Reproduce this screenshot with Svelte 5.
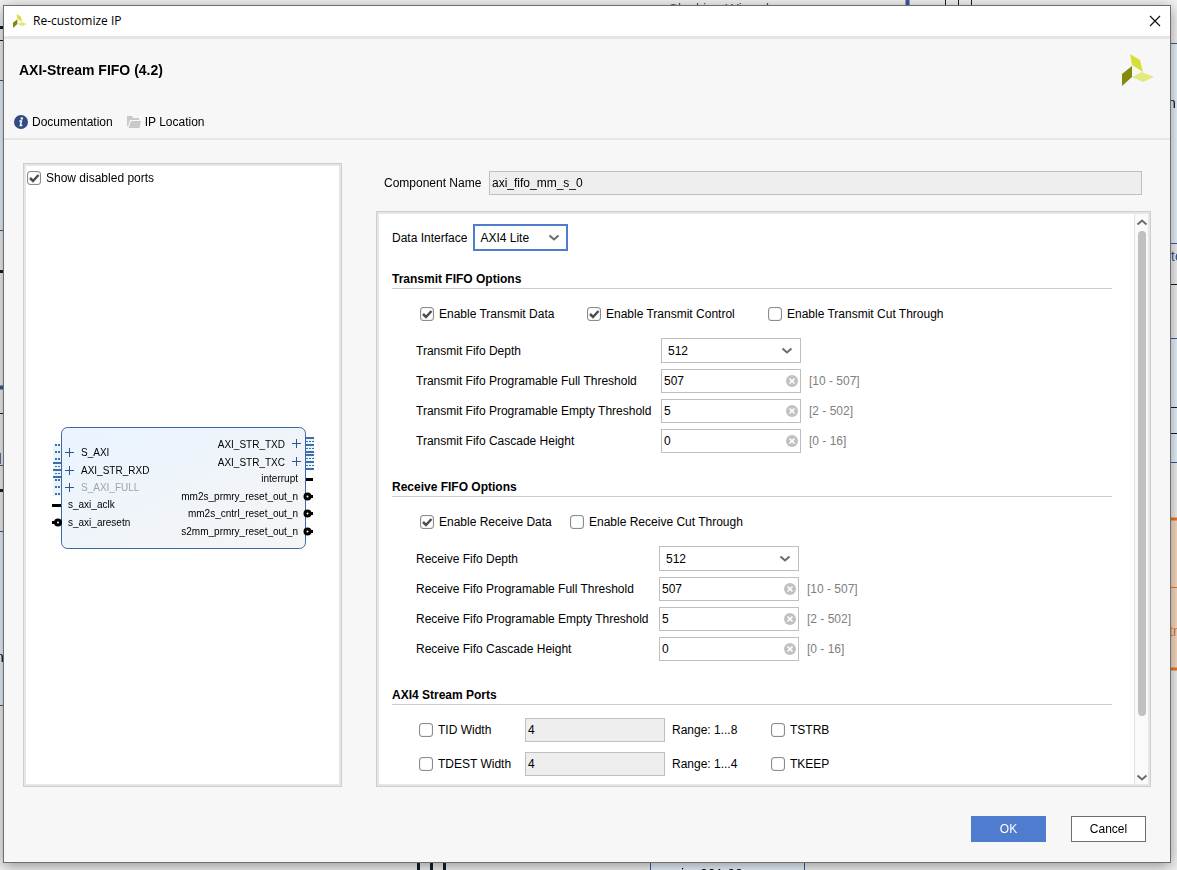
<script>
  let showDisabled = $state(true);
  let componentName = $state('axi_fifo_mm_s_0');
  let dataInterface = $state('AXI4 Lite');

  let fifos = $state([
    {
      id: 'tx',
      title: 'Transmit FIFO Options',
      checks: [
        { label: 'Enable Transmit Data', on: true },
        { label: 'Enable Transmit Control', on: true },
        { label: 'Enable Transmit Cut Through', on: false },
      ],
      depthLabel: 'Transmit Fifo Depth',
      depth: '512',
      fields: [
        { label: 'Transmit Fifo Programable Full Threshold', value: '507', range: '[10 - 507]' },
        { label: 'Transmit Fifo Programable Empty Threshold', value: '5', range: '[2 - 502]' },
        { label: 'Transmit Fifo Cascade Height', value: '0', range: '[0 - 16]' },
      ],
    },
    {
      id: 'rx',
      title: 'Receive FIFO Options',
      checks: [
        { label: 'Enable Receive Data', on: true },
        { label: 'Enable Receive Cut Through', on: false },
      ],
      depthLabel: 'Receive Fifo Depth',
      depth: '512',
      fields: [
        { label: 'Receive Fifo Programable Full Threshold', value: '507', range: '[10 - 507]' },
        { label: 'Receive Fifo Programable Empty Threshold', value: '5', range: '[2 - 502]' },
        { label: 'Receive Fifo Cascade Height', value: '0', range: '[0 - 16]' },
      ],
    },
  ]);

  let ports = $state([
    { label: 'TID Width', on: false, value: '4', range: 'Range: 1...8', flag: 'TSTRB', flagOn: false },
    { label: 'TDEST Width', on: false, value: '4', range: 'Range: 1...4', flag: 'TKEEP', flagOn: false },
  ]);

  const DEPTHS = ['512', '1024', '2048', '4096'];

  // symbol drawing: buses have an expander, plain pins do not
  const LEFT_BUSES = [
    { name: 'S_AXI', y: 27 },
    { name: 'AXI_STR_RXD', y: 45 },
    { name: 'S_AXI_FULL', y: 62, off: true },
  ];
  const RIGHT_BUSES = [
    { name: 'AXI_STR_TXD', y: 18 },
    { name: 'AXI_STR_TXC', y: 36 },
  ];
  const RESETS = [
    { name: 'mm2s_prmry_reset_out_n', y: 71 },
    { name: 'mm2s_cntrl_reset_out_n', y: 88 },
    { name: 's2mm_prmry_reset_out_n', y: 106 },
  ];
</script>

{#snippet logo(size)}
  <svg class="logo" width={size} height={size} viewBox="0 0 32 32" aria-hidden="true">
    <path d="M8 0 18 6 21 18 10 11Z" fill="#d5e03a" />
    <path d="M0 20 10 12V23L0 32Z" fill="#84890d" />
    <path d="M10 23 20 18 32 23 21 28Z" fill="#e3ea7d" />
  </svg>
{/snippet}

{#snippet chevron()}
  <svg class="chevron" width="12" height="8" viewBox="0 0 12 8" aria-hidden="true">
    <path d="M1.5 1.5 6 5.5 10.5 1.5" fill="none" stroke="#6b6b6b" stroke-width="2" />
  </svg>
{/snippet}

{#snippet tick()}
  <svg class="tick" width="14" height="14" viewBox="0 0 14 14" aria-hidden="true">
    <path d="M3 7 6 10 11.5 4" fill="none" stroke="#4d4d4d" stroke-width="2.5" />
  </svg>
{/snippet}

<!-- block design canvas behind the dialog -->
<svg class="canvas" width="100%" height="100%" aria-hidden="true">
  <g stroke="#3c5a96" fill="#eaf4fd">
    <rect x="-20" y="80.5" width="40" height="150" />
    <rect x="-20" y="531.5" width="40" height="174" />
    <rect x="1150" y="43.5" width="60" height="200" />
    <rect x="1150" y="338.5" width="60" height="124" />
    <rect x="650.5" y="858" width="154" height="30" />
    <path d="M0 465.5H6" />
    <path d="M907.5 0V8M0 387.5H6" stroke-width="4" />
  </g>
  <rect x="1150" y="519" width="60" height="150" fill="#f9dcc4" stroke="#e8792b" stroke-width="3" />
  <path d="M1165 587.5H1180" stroke="#e8792b" />
  <g stroke="#10202e">
    <path d="M0 27.5H6M0 271.5H6M0 490.5H6M418.5 860V870M431.5 860V870M444.5 860V870" stroke-width="3" />
    <path d="M0 40.5H6M0 413.5H6M945.5 0V6M958.5 0V6M971.5 0V6" />
    <path d="M1165 284.5H1180M1165 407.5H1180M1165 433.5H1180" />
  </g>
  <g class="canvas-text">
    <text x="668" y="14" fill="#3c5a96">Clocking Wizard</text>
    <text x="1168" y="108">n</text>
    <text x="1171" y="261" fill="#3c5a96">te</text>
    <text x="1169" y="636" fill="#e8792b">tn</text>
    <text x="-6" y="464" fill="#3c5a96">d</text>
    <text x="-4" y="662">n</text>
    <text x="681" y="879">i</text>
    <text x="700" y="879">201 02</text>
  </g>
</svg>

<div class="screen">
  <div class="dialog" role="dialog" aria-label="Re-customize IP">
    <header class="titlebar">
      {@render logo(14)}
      <span class="caption">Re-customize IP</span>
      <button class="close" aria-label="Close">
        <svg width="12" height="12" viewBox="0 0 12 12"><path d="M1 1 11 11M11 1 1 11" stroke="#111" stroke-width="1.2" /></svg>
      </button>
    </header>

    <div class="head">
      <div class="head-row">
        <h1>AXI-Stream FIFO (4.2)</h1>
        {@render logo(32)}
      </div>
      <nav>
        <button class="tool">
          <svg width="14" height="14" viewBox="0 0 14 14" aria-hidden="true">
            <circle cx="7" cy="7" r="7" fill="#2f4d82" />
            <circle cx="7.8" cy="3.5" r="1.2" fill="#fff" />
            <path d="M5.3 6H7.4L6.4 10.5H8.3" fill="none" stroke="#fff" stroke-width="1.5" />
          </svg>
          Documentation
        </button>
        <button class="tool">
          <svg width="14" height="14" viewBox="0 0 14 14" aria-hidden="true">
            <path d="M0 1H5L6 3H12V5H3L1 11H0Z" fill="#c9c9c9" />
            <path d="M4 6H14L12.5 13H1.5Z" fill="#c9c9c9" />
          </svg>
          IP Location
        </button>
      </nav>
    </div>

    <main>
      <section class="panel preview">
        <label class="check">
          <span class="box"><input type="checkbox" bind:checked={showDisabled} />{@render tick()}</span>
          Show disabled ports
        </label>
        <div class="symbol">
          <svg width="262" height="124" viewBox="0 0 262 124" role="img" aria-label="axi_fifo_mm_s symbol">
            <defs>
              <linearGradient id="body" x1="0" y1="0" x2="1" y2="1">
                <stop offset="0" stop-color="#eaf4ff" />
                <stop offset="1" stop-color="#f5f5f5" />
              </linearGradient>
            </defs>
            <rect x="1" y="18" width="8" height="52" fill="#eaf4ff" />
            <rect x="254" y="11" width="8" height="32" fill="#eaf4ff" />
            <rect x="9.5" y="1.5" width="244" height="121" rx="6" fill="url(#body)" stroke="#3d68a8" />
            <path d="M3 19H9M3 26H9M3 33H9M3 61H9M3 54H9M3 68H9" stroke="#3d6fa5" stroke-width="2" stroke-dasharray="2 1" />
            <path d="M3 40.5H9M3 47.5H9" stroke="#3d6fa5" stroke-dasharray="2 1" />
            <path d="M1 37H9M1 44H9M1 51H9" stroke="#3d6fa5" stroke-width="2" />
            <path d="M254 12H262M254 19H262M254 26H262M254 29H262M254 36H262M254 43H262" stroke="#3d6fa5" stroke-width="2" />
            <path d="M254 15.5H262M254 22.5H262M254 32.5H262M254 39.5H262" stroke="#3d6fa5" stroke-dasharray="2 1" />

            {#each LEFT_BUSES as bus}
              <path d="M13 {bus.y - 0.5}H22M17.5 {bus.y - 5}V{bus.y + 4}" stroke="#2f5597" />
              <text class:off={bus.off} x="29" y={bus.y + 3}>{bus.name}</text>
            {/each}
            {#each RIGHT_BUSES as bus}
              <path d="M240 {bus.y - 0.5}H249M244.5 {bus.y - 5}V{bus.y + 4}" stroke="#2f5597" />
              <text x="233" y={bus.y + 4} text-anchor="end">{bus.name}</text>
            {/each}

            <path d="M0 79.5H9M254 53.5H261" stroke="#000" stroke-width="3" />
            <text x="16" y="82">s_axi_aclk</text>
            <path d="M0 96.5H4" stroke="#000" stroke-width="3" />
            <circle cx="6" cy="96.5" r="2.5" fill="#fff" stroke="#000" stroke-width="3" />
            <text x="16" y="100">s_axi_aresetn</text>
            <text x="246" y="56" text-anchor="end">interrupt</text>
            {#each RESETS as pin}
              <path d="M257 {pin.y - 0.5}H261" stroke="#000" stroke-width="3" />
              <circle cx="255.5" cy={pin.y - 0.5} r="2.5" fill="#fff" stroke="#000" stroke-width="3" />
              <text x="246" y={pin.y + 3} text-anchor="end">{pin.name}</text>
            {/each}
          </svg>
        </div>
      </section>

      <div class="config">
        <div class="name-row">
          <label for="component-name">Component Name</label>
          <input id="component-name" class="text" type="text" bind:value={componentName} readonly />
        </div>

        <section class="panel options">
          <div class="scroll-body">
            <div class="interface-row">
              <label for="data-interface">Data Interface</label>
              <span class="select focus">
                <select id="data-interface" bind:value={dataInterface}>
                  <option>AXI4 Lite</option>
                  <option>AXI4</option>
                </select>
                {@render chevron()}
              </span>
            </div>

            {#each fifos as fifo}
              <section class="group {fifo.id}">
                <h2>{fifo.title}</h2>
                <div class="checks">
                  {#each fifo.checks as check}
                    <label class="check">
                      <span class="box"><input type="checkbox" bind:checked={check.on} />{@render tick()}</span>
                      {check.label}
                    </label>
                  {/each}
                </div>
                <div class="fields">
                  <label for="{fifo.id}-depth">{fifo.depthLabel}</label>
                  <span class="select">
                    <select id="{fifo.id}-depth" bind:value={fifo.depth}>
                      {#each DEPTHS as d}
                        <option>{d}</option>
                      {/each}
                    </select>
                    {@render chevron()}
                  </span>
                  <span></span>
                  {#each fifo.fields as field, i}
                    <label for="{fifo.id}-{i}">{field.label}</label>
                    <span class="clearable">
                      <input id="{fifo.id}-{i}" class="text" type="text" bind:value={field.value} />
                      <button class="clear" aria-label="Clear" onclick={() => (field.value = '')}>
                        <svg width="12" height="12" viewBox="0 0 12 12">
                          <circle cx="6" cy="6" r="6" fill="#c1c1c1" />
                          <path d="M3.5 3.5 8.5 8.5M8.5 3.5 3.5 8.5" stroke="#fff" stroke-width="1.6" />
                        </svg>
                      </button>
                    </span>
                    <span class="range">{field.range}</span>
                  {/each}
                </div>
              </section>
            {/each}

            <section class="group">
              <h2>AXI4 Stream Ports</h2>
              <div class="ports">
                {#each ports as port}
                  <label class="check">
                    <span class="box"><input type="checkbox" bind:checked={port.on} />{@render tick()}</span>
                    {port.label}
                  </label>
                  <input class="text" type="text" aria-label={port.label} bind:value={port.value} readonly={!port.on} />
                  <span>{port.range}</span>
                  <label class="check">
                    <span class="box"><input type="checkbox" bind:checked={port.flagOn} />{@render tick()}</span>
                    {port.flag}
                  </label>
                {/each}
              </div>
            </section>
          </div>

          <div class="scrollbar">
            <button class="up" aria-label="Scroll up">{@render chevron()}</button>
            <div class="track"><div class="thumb"></div></div>
            <button class="down" aria-label="Scroll down">{@render chevron()}</button>
          </div>
        </section>
      </div>
    </main>

    <footer>
      <button class="btn primary">OK</button>
      <button class="btn">Cancel</button>
    </footer>
  </div>
</div>

<style>
  :global(body) { background: #f2f2f2; }

  .canvas { position: fixed; inset: 0; }
  .canvas-text { font: 14px "Liberation Sans", Arial, sans-serif; }

  .screen { position: relative; display: flex; box-sizing: border-box; min-height: 100vh; padding: 5px 6px 7px 3px; font: 12px/16px "Liberation Sans", Arial, sans-serif; color: #000; }
  .dialog { flex: 1; display: flex; flex-direction: column; background: #f7f7f7; border: 1px solid #6e6e6e; box-shadow: 0 3px 14px rgba(0,0,0,.4); }

  button { font: inherit; color: inherit; padding: 0; border: none; background: none; cursor: pointer; }
  svg { display: block; }

  .titlebar { display: flex; align-items: center; height: 30px; padding: 0 9px; background: #fff; border-bottom: 3px solid #e6e6e6; }
  .caption { flex: 1; margin-left: 6px; font-family: "Open Sans", "Noto Sans", sans-serif; }

  .head { display: flex; flex-direction: column; justify-content: space-between; height: 84px; padding: 15px 16px 0 10px; border-bottom: 2px solid #e6e6e6; }
  .head-row { display: flex; justify-content: space-between; align-items: center; padding-left: 5px; }
  h1 { margin: 0; font-size: 14px; line-height: 16px; }
  nav { display: flex; gap: 14px; padding-bottom: 8px; }
  .tool { display: flex; align-items: center; gap: 4px; }

  main { flex: 1; display: grid; grid-template-columns: 319px 1fr; gap: 34px; padding: 23px 19px 0; }
  .panel { box-sizing: border-box; background: #fff; border: 1px solid #cdcdcd; box-shadow: inset 0 0 0 2px #e6e6e6; padding: 2px; }

  .preview { display: flex; flex-direction: column; }
  .preview .check { margin: 4px 1px; }
  .symbol { flex: 1; display: flex; align-items: center; justify-content: center; padding-top: 2px; }
  .symbol text { font-size: 10px; }
  .symbol .off { fill: #a3a3a3; }

  .check { display: flex; align-items: center; gap: 5px; }
  .box { position: relative; display: flex; }
  .box input { appearance: none; width: 14px; height: 14px; margin: 0; background: #fff; border: 1px solid #8c8c8c; border-radius: 3px; box-shadow: inset 0 0 1px #8c8c8c; }
  .tick { position: absolute; inset: 0; visibility: hidden; pointer-events: none; }
  .box input:checked + :global(.tick) { visibility: visible; }

  .config { display: flex; flex-direction: column; gap: 16px; }
  .name-row { display: flex; align-items: center; gap: 5px; padding: 8px 9px 0 8px; }
  .name-row label { width: 100px; }
  .name-row .text { flex: 1; }

  .text { box-sizing: border-box; width: 100%; height: 24px; padding: 0 2px; border: 1px solid #bfbfbf; background: #fff; font: inherit; color: inherit; }
  .text:read-only { background: #eee; }

  .options { flex: 1; display: flex; }
  .scroll-body { flex: 1; padding: 10px 22px 8px 13px; }
  .interface-row { display: flex; align-items: center; gap: 6px; margin-bottom: 19px; }

  .select { position: relative; display: flex; align-items: center; }
  .select select { appearance: none; width: 100%; height: 25px; padding: 0 6px; border: 1px solid #bfbfbf; border-radius: 0; background: #fff; font: inherit; color: inherit; }
  .select :global(.chevron) { position: absolute; right: 8px; pointer-events: none; }
  .select.focus select { width: 95px; height: 27px; padding: 0 5px; border: 2px solid #4f7ccf; }

  .group + .group { margin-top: 25px; }
  h2 { margin: 0; font-size: 12px; line-height: 18px; border-bottom: 1px solid #cdcdcd; }
  .checks { display: grid; grid-template-columns: 167px 181px auto; padding: 17px 0 16px 28px; }
  .rx .checks { grid-template-columns: 150px auto; }
  .fields { display: grid; grid-template-columns: 245px 140px auto; row-gap: 6px; align-items: center; padding-left: 24px; }
  .rx .fields { grid-template-columns: 243px 140px auto; }
  .clearable { position: relative; display: flex; align-items: center; }
  .clear { position: absolute; right: 3px; }
  .range { padding-left: 8px; color: #808080; }

  .ports { display: grid; grid-template-columns: 106px 147px 99px auto; row-gap: 10px; align-items: center; padding: 13px 0 0 27px; }
  .ports .text { width: 140px; }

  .scrollbar { display: flex; flex-direction: column; align-items: center; width: 13px; background: #fafafa; border-left: 1px solid #e3e3e3; }
  .scrollbar button { display: flex; }
  .scrollbar .up { padding: 5px 0 4px; transform: rotate(180deg); }
  .scrollbar .down { padding: 4px 0 2px; }
  .track { flex: 1; width: 8px; }
  .thumb { height: 90%; border-radius: 4px; background: #c1c1c1; }

  footer { display: flex; justify-content: flex-end; gap: 25px; padding: 29px 24px 20px; }
  .btn { box-sizing: border-box; width: 75px; height: 26px; border: 1px solid #6e6e6e; background: #fff; }
  .btn.primary { background: #4f7ccf; border-color: #4f7ccf; color: #fff; }
</style>
